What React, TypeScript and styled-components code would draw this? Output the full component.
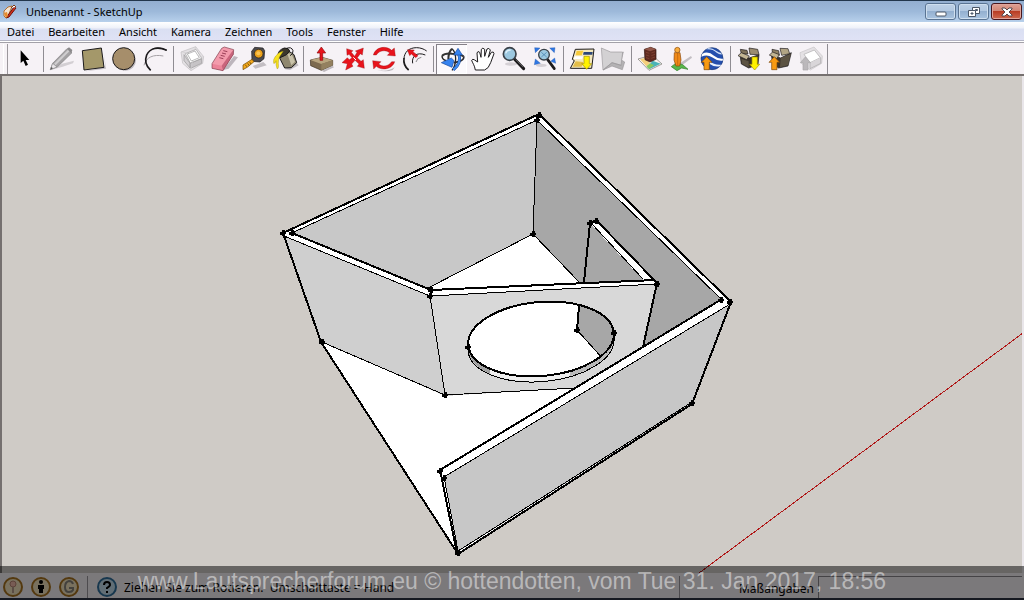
import React from "react";
import styled, { createGlobalStyle } from "styled-components";

const GlobalStyle = createGlobalStyle`
  * { box-sizing: border-box; }
  body {
    margin: 0;
    font-family: "Noto Sans", "Open Sans", sans-serif;
    font-size: 12px;
    color: #000;
    background: #f6f2f6;
  }
  button, input { font: inherit; color: inherit; }
`;

const AppWindow = styled.div`
  position: relative;
  display: flex;
  flex-direction: column;
  min-height: 100vh;
  overflow: hidden;
`;

const TitleBar = styled.header`
  display: flex;
  align-items: center;
  height: 22px;
  padding: 0 2px 0 3px;
  border-top: 1px solid #22364c;
  background: linear-gradient(#93aed0, #9db9da 50%, #b7d0eb);
`;

const Title = styled.h1`
  flex: 1;
  margin: 0 0 0 9px;
  font-size: 11px;
  font-weight: 400;
  line-height: 20px;
`;

const WindowButtons = styled.div`
  display: flex;
  gap: 2px;
`;

const WindowButton = styled.button<{ $close?: boolean }>`
  display: flex;
  align-items: center;
  justify-content: center;
  width: 31px;
  height: 17px;
  padding: 0;
  border: 1px solid ${(p) => (p.$close ? "#47161c" : "#5a7493")};
  border-radius: 3px;
  box-shadow: inset 0 0 0 1px ${(p) => (p.$close ? "#e0a59c" : "#cfdfef")};
  background: ${(p) =>
    p.$close
      ? "linear-gradient(#dfa093 0%, #d28676 45%, #b83d25 50%, #cf6a50 100%)"
      : "linear-gradient(#bdd0e6 0%, #b2c8e1 45%, #94b0d0 50%, #aac4e0 100%)"};
`;

const MenuBar = styled.nav`
  display: flex;
  align-items: center;
  height: 19px;
  border-bottom: 1px solid #b3b4c4;
  background: linear-gradient(#ffffff 0, #eef1f9 6px, #dadff2 7px, #dfe2f5 18px);
`;

const MenuItem = styled.button`
  padding: 1px 7px 0;
  border: 0;
  background: none;
  font-size: 11px;
  line-height: 17px;
`;

const ToolBar = styled.div`
  display: flex;
  flex: none;
  height: 35px;
  padding: 2px 0 0 3px;
  border-top: 1px solid #fff;
  border-bottom: 2px solid #75706f;
  background: linear-gradient(#a3a1a8 1px, #f6f2f6 1px);
`;

const Grip = styled.div`
  width: 5px;
  margin-right: 1px;
  border-left: 1px solid #fff;
  border-right: 1px solid #9b979c;
`;

const ToolGroup = styled.div`
  display: flex;
  padding-right: 6px;
  background: linear-gradient(#8f8c92, #8f8c92) right 2px center / 1px 26px no-repeat;
  &:last-child {
    padding-right: 2px;
    background: linear-gradient(#8f8c92, #8f8c92) right center / 1px 100% no-repeat;
  }
`;

const ToolButton = styled.button<{ $pressed?: boolean }>`
  width: 31px;
  height: 30px;
  padding: 0;
  border: 0;
  background: ${(p) => (p.$pressed ? "#fbf9fc" : "none")};
  box-shadow: ${(p) => (p.$pressed ? "inset 1px 1px #858188, inset -1px -1px #fff" : "none")};
  svg { display: block; width: 31px; height: 30px; }
`;

const Viewport = styled.main`
  display: flex;
  flex: 1;
  min-height: 0;
  padding-left: 1px;
  border-right: 2px solid #e9e6ea;
  background: linear-gradient(90deg, #75706f 2px, #cfcbc6 2px);
  svg { display: block; flex: 1; min-width: 0; }
`;

const StatusBar = styled.footer`
  display: flex;
  flex: none;
  align-items: stretch;
  height: 27px;
  padding: 3px 2px 0 3px;
  border-bottom: 2px solid #2c3242;
  background: #f6f2f6;
`;

const StatusIcons = styled.div`
  display: flex;
  align-items: center;
  gap: 8px;
  margin-right: 8px;
`;

const StatusButton = styled.button`
  width: 20px;
  height: 20px;
  padding: 0;
  border: 0;
  background: none;
  svg { display: block; }
`;

const StatusHint = styled.p`
  flex: 1;
  margin: 0;
  padding: 1px 0 0 7px;
  line-height: 23px;
  white-space: pre;
`;

const HelpArea = styled.div`
  display: flex;
  flex: 1;
  align-items: center;
  padding-left: 9px;
  border-left: 1px solid #9a969c;
`;

const Measurements = styled.div`
  display: flex;
  justify-content: flex-end;
  width: 34%;
  max-width: 343px;
  border-left: 1px solid #9a969c;
`;

const MeasureLabel = styled.label`
  margin-right: 4px;
  padding-top: 1px;
  line-height: 23px;
`;

const MeasureInput = styled.input`
  width: 204px;
  border: 0;
  border-top: 1px solid #8a868c;
  border-left: 1px solid #8a868c;
  background: #f6f2f6;
`;

const Watermark = styled.div`
  position: absolute;
  right: 0;
  bottom: 0;
  left: 0;
  height: 34px;
  background: rgba(0, 0, 0, 0.5);
  color: rgba(255, 255, 255, 0.48);
  font-family: "Liberation Sans", Arial, sans-serif;
  font-size: 23px;
  line-height: 31px;
  text-align: center;
  white-space: nowrap;
  pointer-events: none;
`;

type Tool = { name: string; box: string; art: React.ReactNode; pressed?: boolean };

const ink = "#1c1a1c";

const orangeUp = (x: number, y: number) => (
  <path d={`M${x} ${y}l-16 17h8v22h16v-22h8z`} fill="#f79a12" stroke="#7a4605" strokeWidth="2" />
);

const yellowDown = (x: number, y: number) => (
  <path d={`M${x} ${y}l-15 -17h7v-22h16v22h7z`} fill="#fff200" stroke="#a89400" strokeWidth="2" />
);

const groups: Tool[][] = [
  [
    {
      name: "Auswählen",
      box: "27 132 93 90",
      art: <path d="M62 151V189L70 182L77 198L84 194L77 180H88Z" fill="#000" />,
    },
  ],
  [
    {
      name: "Linie",
      box: "138 132 93 90",
      art: (
        <>
          <path d="M156 209L186 191L222 182L219 190L188 200Z" fill="#d3cfd3" />
          <path d="M151 209L158 190L201 146L216 158L173 200Z" fill="#a4a2a4" stroke="#858385" strokeWidth="2" />
          <path d="M162 191L204 149L209 153L167 196Z" fill="#cfcdcf" />
          <path d="M201 146L207 142L217 150L214 160Z" fill="#8c8a8c" />
          <path d="M151 209L158 190L171 201Z" fill="#e9e6e9" stroke="#8b898b" strokeWidth="2" />
          <path d="M151 209L154 201L159 205Z" fill="#555" />
        </>
      ),
    },
    {
      name: "Rechteck",
      box: "231 132 93 90",
      art: (
        <>
          <path d="M256 214L318 206L312 160L316 200Z" fill="#c4bfc4" />
          <path d="M247 152L304 144L312 202L252 210Z" fill="#a4986a" stroke={ink} strokeWidth="3" />
        </>
      ),
    },
    {
      name: "Kreis",
      box: "324 132 93 90",
      art: (
        <>
          <ellipse cx="376" cy="181" rx="32" ry="31" fill="#bcb7bc" />
          <circle cx="371" cy="176" r="33" fill="#a68e6b" stroke={ink} strokeWidth="3" />
        </>
      ),
    },
    {
      name: "Bogen",
      box: "417 132 93 90",
      art: (
        <g fill="none">
          <path d="M432 196C438 172 460 162 490 168" stroke="#a5a1a5" strokeWidth="3" />
          <path d="M500 151C474 139 450 144 440 165C433 183 440 200 452 211" stroke={ink} strokeWidth="5" />
          <path d="M458 146C474 142 488 144 500 151" stroke={ink} strokeWidth="3" />
        </g>
      ),
    },
  ],
  [
    {
      name: "Komponente erstellen",
      box: "18 72 93 90",
      art: (
        <g fill="#fff" stroke="#9a989a" strokeWidth="2">
          <path d="M33 96L77 80L101 110L98 130L63 152L38 130Z" fill="#e4e1e4" stroke="#c0bdc0" />
          <path d="M42 104L60 130V144L42 122Z" fill="#d3d0d3" />
          <path d="M60 130L95 116V130L62 145Z" fill="#c6c3c6" />
          <path d="M46 101L78 88L95 115L61 129Z" />
          <path d="M34 95L102 112M77 80L62 150" fill="none" stroke="#cfcccf" />
          <path d="M52 102L75 93L88 113L64 123Z" />
        </g>
      ),
    },
    {
      name: "Radierer",
      box: "111 72 93 90",
      art: (
        <>
          <path d="M160 150L192 108L204 112L176 146Z" fill="#bdb6bd" />
          <path d="M126 131L155 85L163 81L191 89L190 103L159 152L126 145Z" fill="#f39bac" />
          <path d="M126 131L155 137L159 152L126 145Z" fill="#ec8399" />
          <path d="M155 137L190 89V103L159 152Z" fill="#c9647c" />
          <path d="M126 131L155 85L163 81L191 89L190 103L159 152L126 145Z" fill="none" stroke="#7e3c4b" strokeWidth="2" />
          <path d="M160 92L172 95M156 99L168 102M152 106L164 109M148 113L160 116" stroke="#9c4058" strokeWidth="3" />
        </>
      ),
    },
    {
      name: "Maßband",
      box: "204 72 93 90",
      art: (
        <>
          <path d="M248 138L280 126L290 136L256 146Z" fill="#c3bec3" />
          <path d="M245 94L254 82L279 84L284 92L282 116L270 126L246 124Z" fill="#4b4b50" stroke={ink} strokeWidth="2" />
          <circle cx="266" cy="101" r="13" fill="#eba11b" stroke={ink} strokeWidth="2" />
          <circle cx="265" cy="100" r="6" fill="#f9c353" />
          <path d="M246 118L252 125L233 141L219 149V135Z" fill="#f4a91c" stroke="#6b4503" strokeWidth="2" />
          <path d="M226 134L230 140M233 130L237 136M239 126L243 132" stroke="#4b3103" strokeWidth="2" />
        </>
      ),
    },
    {
      name: "Farbeimer",
      box: "297 72 93 90",
      art: (
        <>
          <path d="M345 148L380 128L386 136L360 150Z" fill="#c3bec3" />
          <path d="M326 108L357 94L372 104L380 128L364 143L344 144Z" fill="#8f876f" stroke={ink} strokeWidth="3" />
          <path d="M352 101L364 100L375 125L364 136Z" fill="#c9c2a9" />
          <path d="M324 104Q325 90 343 84Q357 83 359 93Q353 106 330 113Z" fill="#3b372c" stroke={ink} strokeWidth="3" />
          <path d="M348 86Q364 78 369 92Q370 103 360 107" fill="none" stroke={ink} strokeWidth="3" />
          <path d="M340 94Q326 96 317 108Q308 119 311 130Q316 132 318 122Q317 136 321 146Q327 148 325 130Q324 118 330 108Z" fill="#f7e21e" stroke="#8e7c05" strokeWidth="1" />
        </>
      ),
    },
  ],
  [
    {
      name: "Drücken/Ziehen",
      box: "408 72 93 90",
      art: (
        <>
          <path d="M456 152L488 138L492 142L462 156Z" fill="#bdb8bd" />
          <path d="M421 120L456 112L488 121V136L454 151L422 137Z" fill="#7d6b50" stroke="#3b3020" strokeWidth="2" />
          <path d="M421 120L456 112L488 121L454 132Z" fill="#b8a57f" />
          <path d="M454 132L488 121V136L454 151Z" fill="#93805f" />
          <path d="M454 81L441 99H450V121H458V99H467Z" fill="#e8141c" stroke="#8d0a0e" strokeWidth="2" />
        </>
      ),
    },
    {
      name: "Verschieben",
      box: "501 72 93 90",
      art: (
        <g fill="#e8141c" stroke="#8d0a0e" strokeWidth="1">
          <path d="M530 86L549 92L544 97L554 109L561 97L556 93L580 84L577 105L571 101L562 113L573 124L580 119L583 145L562 139L567 132L555 121L545 132L549 139L527 150L532 131L516 128L532 113L538 119L546 113L537 103L531 106Z" />
          <path d="M550 112L558 120" stroke="#fff" strokeWidth="3" />
        </g>
      ),
    },
    {
      name: "Drehen",
      box: "594 72 93 90",
      art: (
        <>
          <path d="M620 149Q650 158 674 142L668 150Q646 158 620 149Z" fill="#bdb8bd" />
          <g fill="#e8141c" stroke="#8d0a0e" strokeWidth="1">
            <path d="M610 105C617 79 650 76 665 91L673 84L676 108L652 106L659 99C648 88 627 91 619 105Z" />
            <path d="M674 125C668 147 636 154 619 139L611 147L608 122L633 125L626 132C637 142 656 139 665 125Z" />
          </g>
        </>
      ),
    },
    {
      name: "Versatz",
      box: "687 72 93 90",
      art: (
        <>
          <path d="M702 114C700 128 706 142 716 150" fill="none" stroke={ink} strokeWidth="5" />
          <path d="M702 116C703 97 716 83 740 83C751 83 762 87 770 93" fill="none" stroke={ink} strokeWidth="3" />
          <path d="M728 130C724 110 740 94 766 105" fill="none" stroke={ink} strokeWidth="3" />
          <path d="M738 126Q741 113 754 112" fill="none" stroke="#555" strokeWidth="2" />
          <path d="M712 89L733 90L729 95L744 107L737 113L724 102L719 107Z" fill="#e8141c" stroke="#8d0a0e" strokeWidth="1" />
        </>
      ),
    },
  ],
  [
    {
      name: "Rotieren",
      box: "18 72 93 90",
      pressed: true,
      art: (
        <>
          <g fill="none">
            <path d="M66 86Q77 96 77 116Q76 140 66 151" stroke="#222" strokeWidth="4" />
            <path d="M66 86Q55 96 55 118" stroke="#333" strokeWidth="6" />
            <path d="M36 108Q44 99 66 101Q90 102 101 109" stroke="#333" strokeWidth="6" />
            <path d="M36 108Q36 118 48 122" stroke="#222" strokeWidth="4" />
            <path d="M101 109Q104 120 86 125L72 128" stroke="#2c2c30" strokeWidth="5" />
            <path d="M86 100Q96 130 70 149" stroke="#15479a" strokeWidth="9" />
            <path d="M86 100Q96 130 70 149" stroke="#3c8bf2" strokeWidth="6" />
          </g>
          <path d="M84 85L71 105H97Z" fill="#3583f0" stroke="#15479a" strokeWidth="2" />
          <path d="M34 128L64 114L72 122L66 142Z" fill="#3583f0" stroke="#15479a" strokeWidth="2" />
        </>
      ),
    },
    {
      name: "Schwenken",
      box: "111 72 93 90",
      art: (
        <path
          d="M136 150C134 136 127 128 125 121Q128 115 134 120L143 126L141 99Q143 91 149 97L153 112L154 88Q158 81 164 88L164 109L171 87Q177 82 181 90L175 112L184 97Q191 93 192 101L182 128Q176 146 164 150Z"
          fill="#fff"
          stroke={ink}
          strokeWidth="3"
          strokeLinejoin="round"
        />
      ),
    },
    {
      name: "Zoom",
      box: "204 72 93 90",
      art: (
        <>
          <ellipse cx="243" cy="132" rx="18" ry="5" fill="#d5d0d5" />
          <path d="M253 117L281 146" stroke="#1c1a1c" strokeWidth="9" strokeLinecap="round" />
          <path d="M257 119L279 141" stroke="#777" strokeWidth="2" />
          <circle cx="239" cy="102" r="19" fill="#9cc8e0" stroke="#3a4148" strokeWidth="5" />
          <path d="M227 100Q230 90 242 90" fill="none" stroke="#dff1fa" strokeWidth="4" />
        </>
      ),
    },
    {
      name: "Alles zoomen",
      box: "297 72 93 90",
      art: (
        <>
          <ellipse cx="334" cy="136" rx="16" ry="5" fill="#d5d0d5" />
          <path d="M353 119L373 146" stroke="#1c1a1c" strokeWidth="8" strokeLinecap="round" />
          <circle cx="342" cy="104" r="16" fill="#9cc8e0" stroke="#3a4148" strokeWidth="4" />
          <path d="M334 97L350 111M350 97L334 111" stroke="#3b78a8" strokeWidth="2" />
          <g fill="#2f78e4" stroke="#15479a" strokeWidth="1">
            <path d="M314 83L330 84L316 98Z" />
            <path d="M375 83L359 84L373 98Z" />
            <path d="M313 134L316 117L331 130Z" />
            <path d="M377 130L374 114L362 124Z" />
          </g>
        </>
      ),
    },
  ],
  [
    {
      name: "Aktuelle Ansicht abrufen",
      box: "408 72 93 90",
      art: (
        <>
          <path d="M436 88L492 87L485 145L421 145L433 122L427 118Z" fill="#f4e8bd" stroke={ink} strokeWidth="3" />
          <path d="M440 93L460 92L455 106L437 106Z" fill="#f6c93a" />
          <path d="M461 96L488 96L487 104L459 104Z" fill="#2c4679" />
          <path d="M434 109L460 109L456 118L431 117Z" fill="#fff" />
          <path d="M437 124L460 126L455 140L428 140Z" fill="#e3bd49" />
          {yellowDown(470, 148)}
        </>
      ),
    },
    {
      name: "Gelände umschalten",
      box: "501 72 93 90",
      art: (
        <g stroke="#9b999b" strokeWidth="2">
          <path d="M519 150L546 138L577 149L584 126L574 120L580 96Z" fill="#b4b2b4" />
          <path d="M514 84L542 96L578 96L573 136L546 128L519 150Z" fill="#d3d1d3" />
          <path d="M519 150L546 128L574 136" fill="none" />
        </g>
      ),
    },
  ],
  [
    {
      name: "Modell platzieren",
      box: "12 72 93 90",
      art: (
        <>
          <path d="M24 117L66 105L96 132L57 151Z" fill="#f7f4ee" stroke="#77716c" strokeWidth="2" />
          <path d="M30 118L44 114L60 130L49 139Z" fill="#f4cf7c" />
          <path d="M52 142L68 122L92 131L58 148Z" fill="#4bb3b8" />
          <path d="M49 139L60 130L72 136L57 147Z" fill="#89c95e" />
          <path d="M43 88L62 82L78 88V118L60 126L45 119Z" fill="#5f2a20" stroke="#2f130e" strokeWidth="2" />
          <path d="M43 88L62 82L78 88L60 94Z" fill="#93584a" />
          <path d="M48 97L58 100M48 105L58 108M48 113L58 116M64 99L75 95M64 107L75 103M64 115L75 111" stroke="#8a4a3a" strokeWidth="2" />
        </>
      ),
    },
    {
      name: "Street View",
      box: "105 72 93 90",
      art: (
        <>
          <path d="M146 132L183 108L186 113L153 138Z" fill="#c3bec3" />
          <path d="M124 140L140 128L158 134L174 148L155 144L141 152Z" fill="#58b64a" stroke="#2b7a24" strokeWidth="2" />
          <path d="M133 98L150 98L153 120L149 138H138L132 120Z" fill="#f08a17" stroke="#8a4506" strokeWidth="2" />
          <path d="M143 99V137" stroke="#b9600c" strokeWidth="2" />
          <circle cx="142" cy="90" r="8" fill="#f9ad3c" stroke="#8a4506" strokeWidth="2" />
        </>
      ),
    },
    {
      name: "Vorschau in Google Earth",
      box: "198 72 93 90",
      art: (
        <>
          <circle cx="246" cy="116" r="33" fill="#244fae" stroke="#12316f" strokeWidth="2" />
          <path d="M217 101Q235 92 252 107Q266 118 279 116L278 122Q262 124 246 112Q232 102 214 110Z" fill="#fff" />
          <path d="M228 88Q248 86 260 98Q268 104 276 103L273 99Q266 98 258 92Q248 84 236 84Z" fill="#cfe0f8" />
          <path d="M240 124Q252 136 274 134L270 139Q252 142 238 131Z" fill="#e6effb" />
          {orangeUp(230, 110)}
        </>
      ),
    },
  ],
  [
    {
      name: "Modelle abrufen",
      box: "309 72 93 90",
      art: (
        <>
          <path d="M330 106L357 114L387 104L384 134L356 144L334 132Z" fill="#39332a" stroke={ink} strokeWidth="2" />
          <path d="M334 116L356 124V142L336 131Z" fill="#5c5343" />
          <path d="M357 84L383 88L387 104L360 103Z" fill="#9a8c70" stroke={ink} strokeWidth="2" />
          <path d="M331 88L351 91L354 102L334 102Z" fill="#7d7059" stroke={ink} strokeWidth="2" />
          <path d="M324 107L334 98L358 108L350 119Z" fill="#c2b593" stroke={ink} strokeWidth="2" />
          {yellowDown(374, 150)}
        </>
      ),
    },
    {
      name: "Modell freigeben",
      box: "402 72 93 90",
      art: (
        <>
          <path d="M424 104L452 114L484 98L474 138L446 144L428 132Z" fill="#39332a" stroke={ink} strokeWidth="2" />
          <path d="M452 114L482 101L474 136L450 142Z" fill="#5c5343" />
          <path d="M450 85L474 86L479 101L455 106Z" fill="#b2a585" stroke={ink} strokeWidth="2" />
          <path d="M426 88L446 92L448 106L428 104Z" fill="#8f8165" stroke={ink} strokeWidth="2" />
          <path d="M418 105L428 96L448 104L440 116Z" fill="#c2b593" stroke={ink} strokeWidth="2" />
          {orangeUp(433, 110)}
        </>
      ),
    },
    {
      name: "Komponente freigeben",
      box: "495 72 93 90",
      art: (
        <g stroke="#a9a7a9" strokeWidth="2">
          <path d="M510 98L552 81L577 108L575 130L541 150L514 130Z" fill="#e4e1e4" stroke="#c6c3c6" />
          <path d="M522 103L553 90L571 113L540 128Z" fill="#fff" />
          <path d="M540 128V146L572 130V113" fill="#d9d6d9" />
          <path d="M526 111L511 128H519V150H534V128H542Z" fill="#bbb8bb" />
        </g>
      ),
    },
  ],
];

const menus = ["Datei", "Bearbeiten", "Ansicht", "Kamera", "Zeichnen", "Tools", "Fenster", "Hilfe"];

const corners: [number, number][] = [
  [283, 233], [292, 233], [539, 115], [537, 120], [730, 302], [721, 300], [431, 290], [430, 296],
  [533, 234], [322, 342], [445, 395], [458, 553], [440, 471], [444, 478], [692, 403], [657, 284],
  [590, 223], [596, 221], [468, 347], [614, 333], [577, 330],
];

function SpeakerBox() {
  return (
    <svg viewBox="1 76 1021 497" preserveAspectRatio="xMidYMid slice" role="img" aria-label="3D-Modell">
      <defs>
        <clipPath id="hole">
          <ellipse cx="541" cy="339" rx="73" ry="37" transform="rotate(-5 541 339)" />
        </clipPath>
        <clipPath id="rim">
          <ellipse cx="541" cy="344" rx="73" ry="37" transform="rotate(-5 541 344)" />
          <ellipse cx="541" cy="339" rx="73" ry="37" transform="rotate(-5 541 339)" />
        </clipPath>
      </defs>
      <g shapeRendering="crispEdges">
        <path d="M1023 333L699 573" stroke="#b01818" />
        <path d="M283 233L539 114L731 302L692 404L458 554L321 342Z" fill="#fff" />
        <path d="M292 233L537 120L533 234L428 288Z" fill="#c8c8c8" />
        <path d="M537 120L721 299L643 347L580 284L533 234Z" fill="#a7a7a7" />
        <path d="M284 236L430 296L445 396L322 342Z" fill="#cfcfcf" />
        <path d="M590 223L597 221L655 280L645 282Z" fill="#fff" />
        <path d="M430 290L657 281L657 285L643 347L576 388L445 396Z" fill="#fff" />
        <path d="M430 296L657 284L643 347L576 388L445 396Z" fill="#d8d8d8" />
        <g clipPath="url(#rim)">
          <rect x="460" y="300" width="30" height="90" fill="#a0a0a0" />
          <rect x="490" y="300" width="80" height="90" fill="#efefef" />
          <rect x="570" y="300" width="50" height="90" fill="#b8b8b8" />
        </g>
        <g clipPath="url(#hole)">
          <rect x="460" y="295" width="160" height="90" fill="#fff" />
          <path d="M580 295L577 330L604 360H620V295Z" fill="#a7a7a7" />
          <path d="M577 330L604 360" stroke="#000" />
          <path d="M580 295L577 330" stroke="#000" strokeWidth="2" />
        </g>
        <path d="M440 470L721 299L731 303L692 404L458 554Z" fill="#fff" />
        <path d="M444 477L730 304L692 403L458 552Z" fill="#c7c7c7" />
        <g fill="none" stroke="#000">
          <path d="M294 232L537 120L721 299M537 120L533 234L428 288M533 234L580 283" />
          <path d="M284 236L430 296L445 395L322 342M430 296L657 284M445 395L576 388M431 290V296" />
          <path d="M592 224L643 279" />
          <path d="M468 351A73 37 -5 0 0 614 338" />
          <path d="M444 477L730 304M444 477L458 551L692 402" />
        </g>
        <g fill="none" stroke="#000" strokeWidth="2" strokeLinejoin="bevel">
          <path d="M283 233L539 114L731 302L692 404L458 554L321 342Z" />
          <path d="M292 233L431 290L655 280" />
          <path d="M584 282L590 223L597 221L657 283L643 347" />
          <ellipse cx="541" cy="339" rx="73" ry="37" transform="rotate(-5 541 339)" />
          <path d="M722 299L440 470L457 553" />
        </g>
        {corners.map(([x, y]) => (
          <path key={`${x}-${y}`} d={`M${x - 3} ${y - 1}h2v-2h3v2h1v2h-1v2h-3v-1h-2z`} fill="#000" />
        ))}
      </g>
    </svg>
  );
}

function Badge({ children, ring, fill }: { children: React.ReactNode; ring: string; fill: string }) {
  return (
    <svg width="20" height="20" viewBox="0 0 20 20" aria-hidden="true">
      <circle cx="10" cy="10" r="9" fill={fill} stroke={ring} strokeWidth="2" />
      {children}
    </svg>
  );
}

export default function App() {
  return (
    <>
      <GlobalStyle />
      <AppWindow>
        <TitleBar>
          <svg width="14" height="16" viewBox="0 0 14 16" aria-hidden="true">
            <path d="M1 7L5 3L9 2L6 10L3 14L1 12Z" fill="#f4e3cf" stroke="#b5702f" />
            <path d="M3 14L11 3L13 4L6 13Z" fill="#d3301c" stroke="#6d130b" />
            <path d="M1 9L4 8L5 12L3 14Z" fill="#e78c2e" />
            <path d="M8 4L11 1L13 3" fill="#fff" stroke="#7c3a18" />
          </svg>
          <Title>Unbenannt - SketchUp</Title>
          <WindowButtons>
            <WindowButton aria-label="Minimieren">
              <svg width="12" height="12" viewBox="0 0 12 12">
                <rect x="1" y="6" width="10" height="4" rx="1" fill="#fff" stroke="#4b5666" />
              </svg>
            </WindowButton>
            <WindowButton aria-label="Verkleinern">
              <svg width="12" height="12" viewBox="0 0 12 12" fill="#fff" stroke="#4b5666">
                <path d="M4.500 1.500h7v6h-7z" />
                <path d="M7.500 3.500h2v1h-2z" fill="#9ab5d3" />
                <path d="M.5 4.500h7v6h-7z" />
                <path d="M3 7h2v1h-2z" fill="#9ab5d3" />
              </svg>
            </WindowButton>
            <WindowButton aria-label="Schließen" $close>
              <svg width="12" height="12" viewBox="0 0 12 12">
                <path d="M1 2h3l2 2l2-2h3v1L8 6l3 3v1H8L6 8l-2 2H1V9l3-3l-3-3z" fill="#fff" stroke="#57474c" />
              </svg>
            </WindowButton>
          </WindowButtons>
        </TitleBar>
        <MenuBar>
          {menus.map((m) => (
            <MenuItem key={m}>{m}</MenuItem>
          ))}
        </MenuBar>
        <ToolBar role="toolbar" aria-label="Werkzeuge">
          <Grip />
          {groups.map((group) => (
            <ToolGroup key={group[0].name}>
              {group.map((tool) => (
                <ToolButton key={tool.name} aria-label={tool.name} $pressed={tool.pressed}>
                  <svg viewBox={tool.box}>{tool.art}</svg>
                </ToolButton>
              ))}
            </ToolGroup>
          ))}
        </ToolBar>
        <Viewport>
          <SpeakerBox />
        </Viewport>
        <StatusBar>
          <StatusIcons>
            <StatusButton aria-label="Geostandort">
              <Badge ring="#a8721e" fill="#f2e3bd">
                <circle cx="10" cy="7" r="3" fill="#f0b9a8" stroke="#b98474" />
                <path d="M10 10V16" stroke="#b79a88" strokeWidth="2" />
              </Badge>
            </StatusButton>
            <StatusButton aria-label="Urheber">
              <Badge ring="#a8721e" fill="#f2e3bd">
                <circle cx="10" cy="5" r="2" fill="#000" />
                <path d="M7 8H13V12H12V16H8V12H7Z" fill="#000" />
              </Badge>
            </StatusButton>
            <StatusButton aria-label="Anmelden">
              <Badge ring="#a8721e" fill="#f2e3bd">
                <path d="M14 7Q13 4 10 4Q6 5 6 10Q6 15 10 15Q13 15 14 13V11H10" fill="none" stroke="#86827a" strokeWidth="2" />
              </Badge>
            </StatusButton>
          </StatusIcons>
          <HelpArea>
            <StatusButton aria-label="Hilfe">
              <Badge ring="#2f6f9c" fill="#c3dcec">
                <path d="M7 8Q7 5 10 5Q13 5 13 8Q13 9 10 11V12" fill="none" stroke="#000" strokeWidth="2" />
                <path d="M9 14H11V16H9Z" fill="#000" />
              </Badge>
            </StatusButton>
            <StatusHint>{"Ziehen Sie zum Rotieren.  Umschalttaste = Hand"}</StatusHint>
          </HelpArea>
          <Measurements>
            <MeasureLabel htmlFor="measure">Maßangaben</MeasureLabel>
            <MeasureInput id="measure" />
          </Measurements>
        </StatusBar>
        <Watermark>www.Lautsprecherforum.eu © hottendotten, vom Tue 31. Jan 2017, 18:56</Watermark>
      </AppWindow>
    </>
  );
}
